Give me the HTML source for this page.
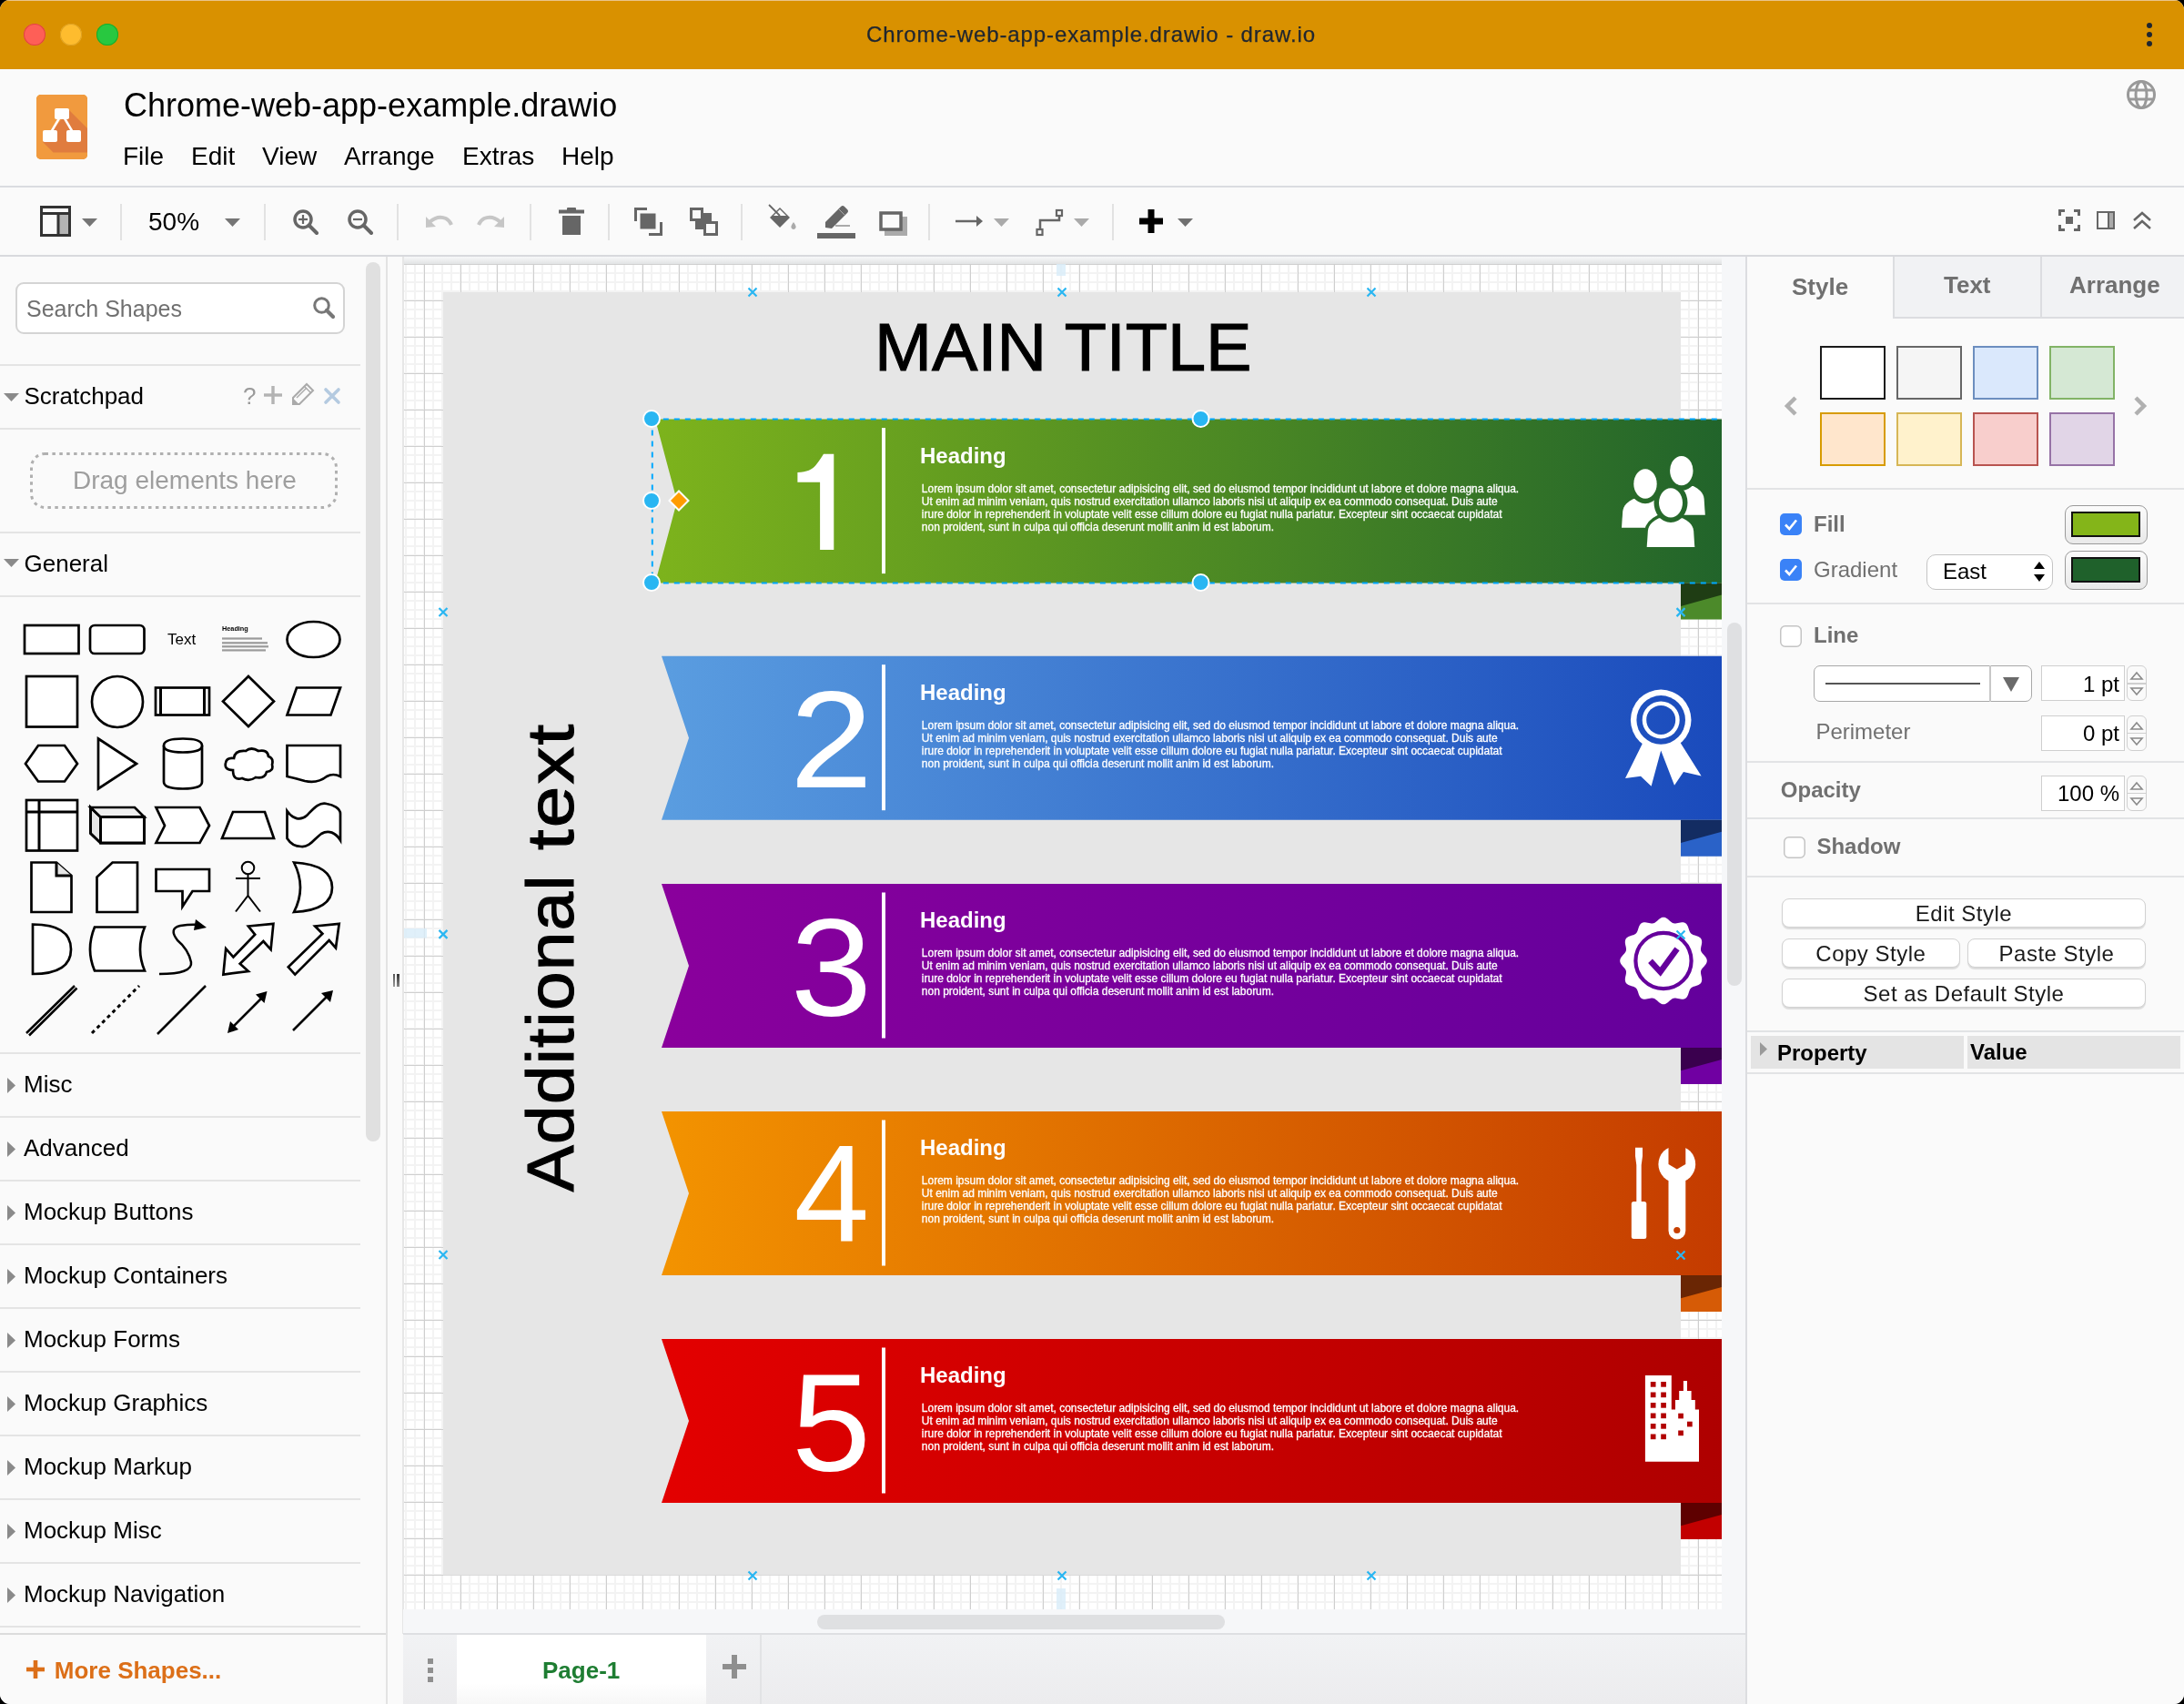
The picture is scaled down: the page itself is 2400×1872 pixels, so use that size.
<!DOCTYPE html><html><head><meta charset="utf-8"><style>
html,body{margin:0;padding:0;background:#000;}
body{width:2400px;height:1872px;overflow:hidden;position:relative;font-family:"Liberation Sans",sans-serif;}
#win{position:absolute;left:0;top:0;width:2400px;height:1872px;border-radius:11px;overflow:hidden;background:#fafafa;}
.t{position:absolute;white-space:pre;line-height:1;}
svg{overflow:visible}
#win{will-change:transform}
</style></head><body><div id="win">
<div style="position:absolute;left:0px;top:0px;width:2400px;height:76px;background:#d99100;"></div>
<div style="position:absolute;left:0px;top:0px;width:2400px;height:1px;background:#e9c48a;"></div>
<div style="position:absolute;left:26px;top:26px;width:24px;height:24px;background:#fe5f57;border-radius:50%;box-shadow:inset 0 0 0 1px #e0443e;"></div>
<div style="position:absolute;left:66px;top:26px;width:24px;height:24px;background:#febc2e;border-radius:50%;box-shadow:inset 0 0 0 1px #dea123;"></div>
<div style="position:absolute;left:106px;top:26px;width:24px;height:24px;background:#28c840;border-radius:50%;box-shadow:inset 0 0 0 1px #1aab29;"></div>
<div class="t" style="left:952px;top:26.3px;font-size:24px;color:#1f2630;font-weight:normal;letter-spacing:0.9px;-webkit-text-stroke:0.25px #1f2630;">Chrome-web-app-example.drawio - draw.io</div>
<div style="position:absolute;left:2359px;top:25px;width:6px;height:6px;background:#1f2630;border-radius:50%;"></div>
<div style="position:absolute;left:2359px;top:35px;width:6px;height:6px;background:#1f2630;border-radius:50%;"></div>
<div style="position:absolute;left:2359px;top:45px;width:6px;height:6px;background:#1f2630;border-radius:50%;"></div>
<div style="position:absolute;left:0px;top:76px;width:2400px;height:129px;background:#fafafa;"></div>
<svg style="position:absolute;left:40px;top:104px;" width="56" height="71" viewBox="0 0 56 71"><rect x="0" y="0" width="56" height="71" rx="5" fill="#f08705"/>
<rect x="0" y="0" width="56" height="71" rx="5" fill="#f19a3e"/>
<path d="M36 17 L56 37 L56 63.5 L18.5 63.5 L7 52 Z" fill="#e07c3e"/>
<line x1="28" y1="21" x2="15" y2="43" stroke="#fff" stroke-width="2.5"/>
<line x1="28" y1="21" x2="41" y2="43" stroke="#fff" stroke-width="2.5"/>
<rect x="20" y="15" width="16" height="12" rx="2" fill="#fff"/>
<rect x="7" y="39" width="16" height="13" rx="2" fill="#fff"/>
<rect x="33" y="39" width="16" height="13" rx="2" fill="#fff"/></svg>
<div class="t" style="left:136px;top:97.5px;font-size:36px;color:#000;font-weight:normal;">Chrome-web-app-example.drawio</div>
<div class="t" style="left:135px;top:158.3px;font-size:28px;color:#000;font-weight:normal;">File</div>
<div class="t" style="left:210px;top:158.3px;font-size:28px;color:#000;font-weight:normal;">Edit</div>
<div class="t" style="left:288px;top:158.3px;font-size:28px;color:#000;font-weight:normal;">View</div>
<div class="t" style="left:378px;top:158.3px;font-size:28px;color:#000;font-weight:normal;">Arrange</div>
<div class="t" style="left:508px;top:158.3px;font-size:28px;color:#000;font-weight:normal;">Extras</div>
<div class="t" style="left:617px;top:158.3px;font-size:28px;color:#000;font-weight:normal;">Help</div>
<svg style="position:absolute;left:2336px;top:87px;" width="34" height="34" viewBox="0 0 34 34"><g fill="none" stroke="#999" stroke-width="3"><circle cx="17" cy="17" r="14.5"/>
<ellipse cx="17" cy="17" rx="6" ry="14.5"/><line x1="3" y1="12" x2="31" y2="12"/><line x1="3" y1="22" x2="31" y2="22"/></g></svg>
<div style="position:absolute;left:0px;top:204px;width:2400px;height:2px;background:#dadce0;"></div>
<div style="position:absolute;left:0px;top:206px;width:2400px;height:75px;background:#fafafa;"></div>
<div style="position:absolute;left:0px;top:280px;width:2400px;height:2px;background:#d8d9dd;"></div>
<svg style="position:absolute;left:44px;top:226px;" width="34" height="34" viewBox="0 0 34 34"><rect x="1.5" y="1.5" width="31" height="31" fill="none" stroke="#333" stroke-width="3"/><rect x="20" y="9" width="11" height="22" fill="#b3b3b3"/><line x1="1.5" y1="8.5" x2="32.5" y2="8.5" stroke="#333" stroke-width="3"/><line x1="20" y1="8.5" x2="20" y2="32.5" stroke="#333" stroke-width="3"/></svg>
<svg style="position:absolute;left:90px;top:240px;" width="17" height="9" viewBox="0 0 17 9"><path d="M0 0 L17 0 L8.5 9 Z" fill="#757575"/></svg>
<div style="position:absolute;left:132px;top:224px;width:2px;height:40px;background:#e2e2e2;"></div>
<div class="t" style="left:163px;top:230.3px;font-size:28px;color:#000;font-weight:normal;">50%</div>
<svg style="position:absolute;left:247px;top:240px;" width="17" height="9" viewBox="0 0 17 9"><path d="M0 0 L17 0 L8.5 9 Z" fill="#757575"/></svg>
<div style="position:absolute;left:290px;top:224px;width:2px;height:40px;background:#e2e2e2;"></div>
<svg style="position:absolute;left:322px;top:230px;" width="28" height="28" viewBox="0 0 28 28"><circle cx="11" cy="11" r="9" fill="none" stroke="#666" stroke-width="3.5"/><line x1="17.5" y1="17.5" x2="26" y2="26" stroke="#666" stroke-width="4" stroke-linecap="round"/><line x1="6" y1="11" x2="16" y2="11" stroke="#666" stroke-width="2.2"/><line x1="11" y1="6" x2="11" y2="16" stroke="#666" stroke-width="2.2"/></svg>
<svg style="position:absolute;left:382px;top:230px;" width="28" height="28" viewBox="0 0 28 28"><circle cx="11" cy="11" r="9" fill="none" stroke="#666" stroke-width="3.5"/><line x1="17.5" y1="17.5" x2="26" y2="26" stroke="#666" stroke-width="4" stroke-linecap="round"/><line x1="6" y1="11" x2="16" y2="11" stroke="#666" stroke-width="2.2"/></svg>
<div style="position:absolute;left:436px;top:224px;width:2px;height:40px;background:#e2e2e2;"></div>
<svg style="position:absolute;left:466px;top:234px;" width="30" height="17" viewBox="0 0 30 17"><path d="M2 16 L2 4 L13 15 Z" fill="#c6c6c6"/><path d="M6 10 Q15 2 24 6 Q28 8 30 13" fill="none" stroke="#c6c6c6" stroke-width="4"/></svg>
<svg style="position:absolute;left:526px;top:234px;" width="30" height="17" viewBox="0 0 30 17"><g transform="translate(30,0) scale(-1,1)"><path d="M2 16 L2 4 L13 15 Z" fill="#c6c6c6"/><path d="M6 10 Q15 2 24 6 Q28 8 30 13" fill="none" stroke="#c6c6c6" stroke-width="4"/></g></svg>
<div style="position:absolute;left:582px;top:224px;width:2px;height:40px;background:#e2e2e2;"></div>
<svg style="position:absolute;left:614px;top:228px;" width="28" height="30" viewBox="0 0 28 30"><rect x="0" y="2.5" width="28" height="4" fill="#666"/><rect x="9" y="0" width="10" height="4" fill="#666" rx="1"/><rect x="4" y="9" width="20" height="21" fill="#666"/></svg>
<div style="position:absolute;left:668px;top:224px;width:2px;height:40px;background:#e2e2e2;"></div>
<svg style="position:absolute;left:697px;top:228px;" width="32" height="31" viewBox="0 0 32 31"><rect x="6.5" y="6.5" width="17" height="17" fill="#666"/><path d="M1.5 15 V1.5 H14" fill="none" stroke="#666" stroke-width="3"/><path d="M16 29.5 H29.5 V16" fill="none" stroke="#666" stroke-width="3"/></svg>
<svg style="position:absolute;left:758px;top:228px;" width="32" height="31" viewBox="0 0 32 31"><rect x="6" y="6" width="18" height="18" fill="#666"/><rect x="1.5" y="1.5" width="12" height="12" fill="#fafafa" stroke="#666" stroke-width="3"/><rect x="16.5" y="16.5" width="13" height="13" fill="#fafafa" stroke="#666" stroke-width="3"/></svg>
<div style="position:absolute;left:814px;top:224px;width:2px;height:40px;background:#e2e2e2;"></div>
<svg style="position:absolute;left:843px;top:224px;" width="34" height="32" viewBox="0 0 34 32"><path d="M3 15 L14 4 L25 15 L14 26 Z" fill="#666"/><path d="M7 13 L14 6 L21 13 Z" fill="#fafafa"/><line x1="2" y1="1" x2="14" y2="13" stroke="#666" stroke-width="1.8"/><path d="M29 20 Q33 25 31 27 Q29 29 27 27 Q25 25 29 20 Z" fill="#aaa"/></svg>
<svg style="position:absolute;left:898px;top:226px;" width="42" height="37" viewBox="0 0 42 37"><path d="M9 24 L9 18 L26 1 Q28 -1 30 1 L33 4 Q35 6 33 8 L16 25 Z" fill="#666"/><line x1="24" y1="4" x2="30" y2="10" stroke="#aaa" stroke-width="1"/><rect x="20" y="21" width="16" height="2" fill="#aaa"/><rect x="0" y="30" width="42" height="6" fill="#666"/></svg>
<svg style="position:absolute;left:966px;top:232px;" width="31" height="27" viewBox="0 0 31 27"><rect x="6" y="6" width="25" height="21" fill="#aaa"/><rect x="2" y="2" width="22" height="18" fill="#fafafa" stroke="#666" stroke-width="3.5"/></svg>
<div style="position:absolute;left:1020px;top:224px;width:2px;height:40px;background:#e2e2e2;"></div>
<svg style="position:absolute;left:1050px;top:236px;" width="31" height="14" viewBox="0 0 31 14"><line x1="0" y1="7" x2="25" y2="7" stroke="#666" stroke-width="2.5"/><path d="M23 1 L30 7 L23 13 Z" fill="#666"/></svg>
<svg style="position:absolute;left:1092px;top:240px;" width="17" height="9" viewBox="0 0 17 9"><path d="M0 0 L17 0 L8.5 9 Z" fill="#aaa"/></svg>
<svg style="position:absolute;left:1137px;top:229px;" width="32" height="31" viewBox="0 0 32 31"><path d="M6 25 V13 H27 V5" fill="none" stroke="#666" stroke-width="2.5"/><rect x="2.5" y="23" width="6" height="6" fill="#fafafa" stroke="#666" stroke-width="2.2"/><rect x="24" y="2" width="6" height="6" fill="#fafafa" stroke="#666" stroke-width="2.2"/></svg>
<svg style="position:absolute;left:1180px;top:240px;" width="17" height="9" viewBox="0 0 17 9"><path d="M0 0 L17 0 L8.5 9 Z" fill="#aaa"/></svg>
<div style="position:absolute;left:1222px;top:224px;width:2px;height:40px;background:#e2e2e2;"></div>
<svg style="position:absolute;left:1252px;top:230px;" width="26" height="26" viewBox="0 0 26 26"><rect x="9.5" y="0" width="7" height="26" fill="#000"/><rect x="0" y="9.5" width="26" height="7" fill="#000"/></svg>
<svg style="position:absolute;left:1294px;top:240px;" width="17" height="9" viewBox="0 0 17 9"><path d="M0 0 L17 0 L8.5 9 Z" fill="#707070"/></svg>
<svg style="position:absolute;left:2262px;top:230px;" width="24" height="24" viewBox="0 0 24 24"><path d="M0 7 V0 H7 V3 H3 V7 Z M17 0 H24 V7 H21 V3 H17 Z M0 17 H3 V21 H7 V24 H0 Z M21 17 H24 V24 H17 V21 H21 Z" fill="#666"/><rect x="8" y="8" width="8" height="8" fill="#666"/></svg>
<svg style="position:absolute;left:2304px;top:232px;" width="20" height="20" viewBox="0 0 20 20"><rect x="1" y="1" width="18" height="18" fill="none" stroke="#666" stroke-width="2"/><rect x="13" y="2" width="5" height="16" fill="#aaa"/><line x1="13" y1="1" x2="13" y2="19" stroke="#666" stroke-width="2"/></svg>
<svg style="position:absolute;left:2343px;top:232px;" width="22" height="20" viewBox="0 0 22 20"><path d="M2 10 L11 2 L20 10 M2 19 L11 11 L20 19" fill="none" stroke="#666" stroke-width="2.5"/></svg>
<div style="position:absolute;left:0px;top:282px;width:424px;height:1513px;background:#fafafa;"></div>
<div style="position:absolute;left:424px;top:282px;width:2px;height:1590px;background:#e3e3e3;"></div>
<div style="position:absolute;left:426px;top:282px;width:17px;height:1513px;background:#fafafa;"></div>
<div style="position:absolute;left:431.5px;top:1070px;width:2.5px;height:14px;background:linear-gradient(#555,#999);"></div>
<div style="position:absolute;left:436px;top:1070px;width:2.5px;height:14px;background:linear-gradient(#333,#888);"></div>
<div style="position:absolute;left:402px;top:288px;width:16px;height:966px;background:#e0e0e0;border-radius:8px;"></div>
<div style="position:absolute;left:17px;top:310px;width:362px;height:57px;background:#fff;border:2px solid #d4d4d4;border-radius:9px;box-sizing:border-box;"></div>
<div class="t" style="left:29px;top:326.8px;font-size:25px;color:#707070;font-weight:normal;">Search Shapes</div>
<svg style="position:absolute;left:343px;top:325px;" width="26" height="26" viewBox="0 0 26 26"><circle cx="10.5" cy="10.5" r="7.8" fill="none" stroke="#777" stroke-width="3"/><line x1="16" y1="16" x2="23" y2="23" stroke="#777" stroke-width="4.2" stroke-linecap="round"/></svg>
<div style="position:absolute;left:0px;top:400px;width:396px;height:2px;background:#e4e4e4;"></div>
<svg style="position:absolute;left:4px;top:432px;" width="17" height="9" viewBox="0 0 17 9"><path d="M0 0 L17 0 L8.5 9 Z" fill="#8a8a8a"/></svg>
<div class="t" style="left:26.5px;top:422.0px;font-size:26px;color:#000;font-weight:normal;">Scratchpad</div>
<div class="t" style="left:267px;top:421.8px;font-size:26px;color:#9a9a9a;font-weight:normal;">?</div>
<svg style="position:absolute;left:290px;top:424px;" width="20" height="20" viewBox="0 0 20 20"><rect x="8.3" y="0" width="3.4" height="20" fill="#b3b3b3"/><rect x="0" y="8.3" width="20" height="3.4" fill="#b3b3b3"/></svg>
<svg style="position:absolute;left:322px;top:422px;" width="22" height="22" viewBox="0 0 22 22"><path d="M0 22 L0 15 L15 0 L22 7 L7 22 Z" fill="none" stroke="#aaa" stroke-width="2"/><path d="M0 22 L0 15.5 L6.5 22 Z" fill="#aaa"/><line x1="4" y1="15" x2="15" y2="4" stroke="#aaa" stroke-width="1.5"/><line x1="12" y1="2" x2="20" y2="10" stroke="#aaa" stroke-width="1.5"/></svg>
<svg style="position:absolute;left:356px;top:426px;" width="18" height="18" viewBox="0 0 18 18"><path d="M2 2 L16 16 M16 2 L2 16" stroke="#b4cae0" stroke-width="3.6" stroke-linecap="round"/></svg>
<div style="position:absolute;left:0px;top:470px;width:396px;height:2px;background:#e4e4e4;"></div>
<svg style="position:absolute;left:33px;top:497px;" width="338" height="62" viewBox="0 0 338 62"><rect x="1.5" y="1.5" width="335" height="59" rx="15" fill="none" stroke="#b0b0b0" stroke-width="3" stroke-dasharray="3.5 4.4"/></svg>
<div class="t" style="left:80px;top:514.3px;font-size:28px;color:#9e9e9e;font-weight:normal;">Drag elements here</div>
<div style="position:absolute;left:0px;top:584px;width:396px;height:2px;background:#e4e4e4;"></div>
<svg style="position:absolute;left:4px;top:614px;" width="17" height="9" viewBox="0 0 17 9"><path d="M0 0 L17 0 L8.5 9 Z" fill="#8a8a8a"/></svg>
<div class="t" style="left:26.5px;top:606.0px;font-size:26px;color:#000;font-weight:normal;">General</div>
<div style="position:absolute;left:0px;top:654px;width:396px;height:2px;background:#e4e4e4;"></div>
<svg style="position:absolute;left:0px;top:0px;" width="400" height="1200" viewBox="0 0 400 1200"><rect x="27" y="687" width="59.5" height="31" stroke="#000" stroke-width="2.7" fill="#fff"/><rect x="99" y="687" width="59.5" height="31" rx="5" stroke="#000" stroke-width="2.7" fill="#fff"/><text x="184" y="708" font-family="Liberation Sans" font-size="17" fill="#000">Text</text><text x="244" y="693" font-family="Liberation Sans" font-size="7.3" font-weight="bold" fill="#000">Heading</text><rect x="244" y="700.4" width="44" height="2.2" fill="#9a9a9a"/><rect x="244" y="705.2" width="50" height="2.2" fill="#9a9a9a"/><rect x="244" y="709.2" width="51" height="2.2" fill="#9a9a9a"/><rect x="244" y="713.3" width="48" height="2.2" fill="#9a9a9a"/><ellipse cx="344.5" cy="702.5" rx="29" ry="19.5" stroke="#000" stroke-width="2.7" fill="#fff"/><rect x="29" y="743" width="56" height="55.5" stroke="#000" stroke-width="2.7" fill="#fff"/><circle cx="129" cy="771" r="28" stroke="#000" stroke-width="2.7" fill="#fff"/><rect x="171" y="755.5" width="59" height="30" stroke="#000" stroke-width="2.7" fill="#fff"/><line x1="176.5" y1="755.5" x2="176.5" y2="785.5" stroke="#000" stroke-width="3"/><line x1="224.5" y1="755.5" x2="224.5" y2="785.5" stroke="#000" stroke-width="3"/><path d="M273 743 L301 770.5 L273 798 L245 770.5 Z" stroke="#000" stroke-width="2.7" fill="#fff"/><path d="M326 755.5 L374 755.5 L363.5 785.5 L315.5 785.5 Z" stroke="#000" stroke-width="2.7" fill="#fff"/><path d="M42 819 L71 819 L85 839 L71 858.5 L42 858.5 L28 839 Z" stroke="#000" stroke-width="2.7" fill="#fff"/><path d="M108 811.5 L150 839 L108 866.5 Z" stroke="#000" stroke-width="2.7" fill="#fff"/><path d="M180 819 Q180 811.5 201 811.5 Q222 811.5 222 819 L222 859 Q222 866.5 201 866.5 Q180 866.5 180 859 Z" stroke="#000" stroke-width="2.7" fill="#fff"/><path d="M180 819 Q180 826.5 201 826.5 Q222 826.5 222 819" stroke="#000" stroke-width="2.7" fill="#fff"/><path d="M256 846 Q246 846 248 838 Q249 832 257 833 Q258 824 270 825 Q276 820 284 825 Q294 823 295 831 Q301 833 299 840 Q301 847 293 848 Q291 856 281 854 Q274 859 266 855 Q256 858 256 846 Z" stroke="#000" stroke-width="2.7" fill="#fff"/><path d="M315.5 819 L374 819 L374 853 Q366 849 359 853 Q349 861 335 858 Q325 855 315.5 853 Z" stroke="#000" stroke-width="2.7" fill="#fff"/><rect x="29" y="879" width="56" height="55.5" stroke="#000" stroke-width="2.7" fill="#fff"/><line x1="29" y1="892" x2="85" y2="892" stroke="#000" stroke-width="3"/><line x1="43" y1="879" x2="43" y2="934.5" stroke="#000" stroke-width="3"/><path d="M99.5 887 L110.5 897.5 L158.5 897.5 L158.5 926 L110.5 926 L99.5 915.5 Z" fill="#e6e6e6" stroke="#000" stroke-width="3"/><path d="M99.5 887 L148 887 L158.5 897.5 L110.5 897.5 Z" fill="#f0f0f0" stroke="#000" stroke-width="2.7"/><rect x="110.5" y="897.5" width="48" height="28.5" fill="#fff" stroke="#000" stroke-width="3"/><path d="M171.5 887 L219.5 887 L230 907 L219.5 926 L171.5 926 L181 907 Z" stroke="#000" stroke-width="2.7" fill="#fff"/><path d="M256 892 L291 892 L301 921 L244 921 Z" stroke="#000" stroke-width="2.7" fill="#fff"/><path d="M315.5 891 C322 900 330 902 337 896 C344 889 350 881 359 883 C366 884 374 888 374 894 L374 923 C369 915 361 911 353 916 C345 922 340 931 331 930 C323 930 318 925 315.5 921 Z" stroke="#000" stroke-width="2.7" fill="#fff"/><path d="M34.5 947.5 L62 947.5 L78.5 962 L78.5 1002 L34.5 1002 Z" stroke="#000" stroke-width="2.7" fill="#fff"/><path d="M62 947.5 L62 962 L78.5 962" fill="#e6e6e6" stroke="#000" stroke-width="3"/><path d="M123.6 947.5 L151 947.5 L151 1002 L106.5 1002 L106.5 963.5 Z" stroke="#000" stroke-width="2.7" fill="#fff"/><path d="M171.5 955 L230 955 L230 979 L211.5 979 L200.5 996 L200.5 979 L171.5 979 Z" stroke="#000" stroke-width="2.7" fill="#fff"/><circle cx="272.5" cy="953.5" r="6.8" fill="none" stroke="#000" stroke-width="2"/><path d="M272.5 960.5 L272.5 984 M259 965 L286 965 M259 1001.5 L272.5 984 L286 1001.5" fill="none" stroke="#000" stroke-width="2"/><path d="M323 947.5 Q365 950 365 975 Q365 1000 323 1002 Q337 975 323 947.5 Z" stroke="#000" stroke-width="2.7" fill="#fff"/><path d="M36 1015.5 Q78 1015.5 78 1043 Q78 1070 36 1070 Z" stroke="#000" stroke-width="2.7" fill="#fff"/><path d="M104 1018.5 L159 1018.5 Q149 1043 159 1066.5 L104 1066.5 Q94 1043 104 1018.5 Z" stroke="#000" stroke-width="2.7" fill="#fff"/><path d="M175 1070 Q212 1070 210 1057 Q207 1043 195 1033 Q185 1020 198 1017 Q210 1015 220 1016" fill="none" stroke="#000" stroke-width="2.5"/><path d="M215 1010 L227 1019 L213 1022 Z" fill="#000"/><path d="M300.4 1014.8 L272.9 1017.5 L280.2 1026.7 L256.4 1051.4 L248.2 1042.2 L245.4 1070.6 L272.9 1067 L263.7 1058.7 L289.4 1034 L297.6 1043.1 Z" stroke="#000" stroke-width="2.7" fill="#fff"/><path d="M372.7 1014.8 L346.2 1017.5 L354.4 1025.8 L316.8 1062.4 L324.2 1070.6 L361.7 1033 L369 1041.3 Z" stroke="#000" stroke-width="2.7" fill="#fff"/><path d="M29 1135 L82 1083 M32 1137.5 L84.5 1085.5" stroke="#000" stroke-width="2.5"/><path d="M101 1135 L153 1083" stroke="#000" stroke-width="3" stroke-dasharray="4 4"/><path d="M173 1136 L226 1083" stroke="#000" stroke-width="2.5"/><path d="M254 1130 L291 1093" stroke="#000" stroke-width="2.5"/><path d="M250 1135 L253 1122 L262 1131 Z M293.5 1089 L290.5 1102 L281 1092.5 Z" fill="#000"/><path d="M322 1132 L360 1094" stroke="#000" stroke-width="2.5"/><path d="M366 1088 L363 1101 L353 1091 Z" fill="#000"/></svg>
<div style="position:absolute;left:0px;top:1156px;width:396px;height:2px;background:#e4e4e4;"></div>
<svg style="position:absolute;left:8px;top:1184px;" width="9" height="17" viewBox="0 0 9 17"><path d="M0 0 L9 8.5 L0 17 Z" fill="#8a8a8a"/></svg>
<div class="t" style="left:26px;top:1178.0px;font-size:26px;color:#000;font-weight:normal;">Misc</div>
<div style="position:absolute;left:0px;top:1226px;width:396px;height:2px;background:#e4e4e4;"></div>
<svg style="position:absolute;left:8px;top:1254px;" width="9" height="17" viewBox="0 0 9 17"><path d="M0 0 L9 8.5 L0 17 Z" fill="#8a8a8a"/></svg>
<div class="t" style="left:26px;top:1248.0px;font-size:26px;color:#000;font-weight:normal;">Advanced</div>
<div style="position:absolute;left:0px;top:1296px;width:396px;height:2px;background:#e4e4e4;"></div>
<svg style="position:absolute;left:8px;top:1324px;" width="9" height="17" viewBox="0 0 9 17"><path d="M0 0 L9 8.5 L0 17 Z" fill="#8a8a8a"/></svg>
<div class="t" style="left:26px;top:1318.0px;font-size:26px;color:#000;font-weight:normal;">Mockup Buttons</div>
<div style="position:absolute;left:0px;top:1366px;width:396px;height:2px;background:#e4e4e4;"></div>
<svg style="position:absolute;left:8px;top:1394px;" width="9" height="17" viewBox="0 0 9 17"><path d="M0 0 L9 8.5 L0 17 Z" fill="#8a8a8a"/></svg>
<div class="t" style="left:26px;top:1388.0px;font-size:26px;color:#000;font-weight:normal;">Mockup Containers</div>
<div style="position:absolute;left:0px;top:1436px;width:396px;height:2px;background:#e4e4e4;"></div>
<svg style="position:absolute;left:8px;top:1464px;" width="9" height="17" viewBox="0 0 9 17"><path d="M0 0 L9 8.5 L0 17 Z" fill="#8a8a8a"/></svg>
<div class="t" style="left:26px;top:1458.0px;font-size:26px;color:#000;font-weight:normal;">Mockup Forms</div>
<div style="position:absolute;left:0px;top:1506px;width:396px;height:2px;background:#e4e4e4;"></div>
<svg style="position:absolute;left:8px;top:1534px;" width="9" height="17" viewBox="0 0 9 17"><path d="M0 0 L9 8.5 L0 17 Z" fill="#8a8a8a"/></svg>
<div class="t" style="left:26px;top:1528.0px;font-size:26px;color:#000;font-weight:normal;">Mockup Graphics</div>
<div style="position:absolute;left:0px;top:1576px;width:396px;height:2px;background:#e4e4e4;"></div>
<svg style="position:absolute;left:8px;top:1604px;" width="9" height="17" viewBox="0 0 9 17"><path d="M0 0 L9 8.5 L0 17 Z" fill="#8a8a8a"/></svg>
<div class="t" style="left:26px;top:1598.0px;font-size:26px;color:#000;font-weight:normal;">Mockup Markup</div>
<div style="position:absolute;left:0px;top:1646px;width:396px;height:2px;background:#e4e4e4;"></div>
<svg style="position:absolute;left:8px;top:1674px;" width="9" height="17" viewBox="0 0 9 17"><path d="M0 0 L9 8.5 L0 17 Z" fill="#8a8a8a"/></svg>
<div class="t" style="left:26px;top:1668.0px;font-size:26px;color:#000;font-weight:normal;">Mockup Misc</div>
<div style="position:absolute;left:0px;top:1716px;width:396px;height:2px;background:#e4e4e4;"></div>
<svg style="position:absolute;left:8px;top:1744px;" width="9" height="17" viewBox="0 0 9 17"><path d="M0 0 L9 8.5 L0 17 Z" fill="#8a8a8a"/></svg>
<div class="t" style="left:26px;top:1738.0px;font-size:26px;color:#000;font-weight:normal;">Mockup Navigation</div>
<div style="position:absolute;left:0px;top:1786px;width:396px;height:2px;background:#e4e4e4;"></div>
<div style="position:absolute;left:0px;top:1794px;width:424px;height:2px;background:#dcdcdc;"></div>
<div style="position:absolute;left:0px;top:1796px;width:424px;height:76px;background:#fafafa;"></div>
<svg style="position:absolute;left:28.5px;top:1824px;" width="20" height="20" viewBox="0 0 20 20"><rect x="7.7" y="0" width="4.6" height="20" fill="#dc6f18"/><rect x="0" y="7.7" width="20" height="4.6" fill="#dc6f18"/></svg>
<div class="t" style="left:59.8px;top:1822.0px;font-size:26px;color:#dc6f18;font-weight:bold;">More Shapes...</div>
<div style="position:absolute;left:442px;top:282px;width:2px;height:1513px;background:#e6e6e6;"></div>
<div style="position:absolute;left:444px;top:282px;width:1448px;height:8px;background:linear-gradient(#f7f8f9,#e2e4e5);"></div>
<div style="position:absolute;left:1892px;top:282px;width:26px;height:1513px;background:#f6f7f9;"></div>
<div style="position:absolute;left:443px;top:1768px;width:1449px;height:26px;background:#f6f7f9;"></div>
<div style="position:absolute;left:1898px;top:684px;width:16px;height:399px;background:#dfe0e2;border-radius:8px;"></div>
<div style="position:absolute;left:898px;top:1774px;width:448px;height:16px;background:#dfe0e2;border-radius:8px;"></div>
<div style="position:absolute;left:443px;top:1794px;width:1476px;height:2px;background:#dedfe2;"></div>
<div style="position:absolute;left:444px;top:290px;width:1448px;height:1478px;overflow:hidden;background-color:#fff;background-image:linear-gradient(to right,#cfcfcf 1px,transparent 1px),linear-gradient(to bottom,#cfcfcf 1px,transparent 1px),linear-gradient(to right,#f3f3f3 2px,transparent 2px),linear-gradient(to bottom,#f3f3f3 2px,transparent 2px);background-size:40px 40px,40px 40px,10px 10px,10px 10px;background-position:22px 0,0 0,1px 0,0 -1px;">
<svg width="1448" height="1478" viewBox="444 290 1448 1478" style="position:absolute;left:0;top:0"><defs><linearGradient id="bg0" gradientUnits="userSpaceOnUse" x1="720" y1="0" x2="1923" y2="0"><stop offset="0" stop-color="#7db31c"/><stop offset="1" stop-color="#1f622b"/></linearGradient><linearGradient id="bg1" gradientUnits="userSpaceOnUse" x1="727" y1="0" x2="1923" y2="0"><stop offset="0" stop-color="#5a9de0"/><stop offset="1" stop-color="#1848bb"/></linearGradient><linearGradient id="bg2" gradientUnits="userSpaceOnUse" x1="727" y1="0" x2="1923" y2="0"><stop offset="0" stop-color="#8a009c"/><stop offset="1" stop-color="#62009c"/></linearGradient><linearGradient id="bg3" gradientUnits="userSpaceOnUse" x1="727" y1="0" x2="1923" y2="0"><stop offset="0" stop-color="#f39300"/><stop offset="1" stop-color="#c33900"/></linearGradient><linearGradient id="bg4" gradientUnits="userSpaceOnUse" x1="727" y1="0" x2="1923" y2="0"><stop offset="0" stop-color="#e30000"/><stop offset="1" stop-color="#ad0000"/></linearGradient></defs><rect x="487" y="321" width="1360" height="1409.5" fill="#e6e6e6"/><text transform="translate(961,407) scale(1.015,1)" x="0" y="0" font-family="Liberation Sans" font-size="74.5" fill="#000" stroke="#000" stroke-width="1.1">MAIN TITLE</text><text transform="translate(630.4,1309.2) rotate(-90) scale(1.063,1)" x="0" y="0" font-family="Liberation Sans" font-size="72" letter-spacing="1.2" fill="#000" stroke="#000" stroke-width="1.1">Additional</text><text transform="translate(630.4,934.1) rotate(-90) scale(1.134,1)" x="0" y="0" font-family="Liberation Sans" font-size="72" letter-spacing="2.0" fill="#000" stroke="#000" stroke-width="1.1">text</text><path d="M720 460.6 L1923 460.6 L1923 640.6 L720 640.6 L744 550.6 Z" fill="url(#bg0)"/><path d="M1847 640.6 L1892 640.6 L1892 680.6 L1847 680.6 Z" fill="#4c8a2a"/><path d="M1847 640.6 L1892 640.6 L1892 653.6 L1847 665.9 Z" fill="#1f3d14"/><path d="M905 498.7 L916.3 498.7 L916.3 603.9 L901.1 603.9 L901.1 529.7 L876.4 529.7 L876.4 519 C887 518.5 892.5 516 896.5 511 C900 506.5 903 502 905 498.7 Z" fill="#fff"/><rect x="969" y="470.1" width="4" height="160" fill="#fff"/><text x="1011" y="508.5" font-family="Liberation Sans" font-size="24" font-weight="bold" fill="#fff">Heading</text><text x="1012.8" y="540.9" font-family="Liberation Sans" font-size="12" fill="#fff" stroke="#fff" stroke-width="0.3">Lorem ipsum dolor sit amet, consectetur adipisicing elit, sed do eiusmod tempor incididunt ut labore et dolore magna aliqua.</text><text x="1012.8" y="554.8" font-family="Liberation Sans" font-size="12" fill="#fff" stroke="#fff" stroke-width="0.3">Ut enim ad minim veniam, quis nostrud exercitation ullamco laboris nisi ut aliquip ex ea commodo consequat. Duis aute</text><text x="1012.8" y="568.7" font-family="Liberation Sans" font-size="12" fill="#fff" stroke="#fff" stroke-width="0.3">irure dolor in reprehenderit in voluptate velit esse cillum dolore eu fugiat nulla pariatur. Excepteur sint occaecat cupidatat</text><text x="1012.8" y="582.6" font-family="Liberation Sans" font-size="12" fill="#fff" stroke="#fff" stroke-width="0.3">non proident, sunt in culpa qui officia deserunt mollit anim id est laborum.</text><path d="M727 720.7 L1923 720.7 L1923 900.7 L727 900.7 L757 810.7 Z" fill="url(#bg1)"/><path d="M1847 900.7 L1892 900.7 L1892 940.7 L1847 940.7 Z" fill="#2a62c8"/><path d="M1847 900.7 L1892 900.7 L1892 913.7 L1847 926.0 Z" fill="#132c62"/><text transform="translate(868.1,864.5) scale(1.07,1)" x="0" y="0" font-family="Liberation Sans" font-size="153" fill="#fff">2</text><rect x="969" y="730.2" width="4" height="160" fill="#fff"/><text x="1011" y="768.6" font-family="Liberation Sans" font-size="24" font-weight="bold" fill="#fff">Heading</text><text x="1012.8" y="801.0" font-family="Liberation Sans" font-size="12" fill="#fff" stroke="#fff" stroke-width="0.3">Lorem ipsum dolor sit amet, consectetur adipisicing elit, sed do eiusmod tempor incididunt ut labore et dolore magna aliqua.</text><text x="1012.8" y="814.9" font-family="Liberation Sans" font-size="12" fill="#fff" stroke="#fff" stroke-width="0.3">Ut enim ad minim veniam, quis nostrud exercitation ullamco laboris nisi ut aliquip ex ea commodo consequat. Duis aute</text><text x="1012.8" y="828.8" font-family="Liberation Sans" font-size="12" fill="#fff" stroke="#fff" stroke-width="0.3">irure dolor in reprehenderit in voluptate velit esse cillum dolore eu fugiat nulla pariatur. Excepteur sint occaecat cupidatat</text><text x="1012.8" y="842.7" font-family="Liberation Sans" font-size="12" fill="#fff" stroke="#fff" stroke-width="0.3">non proident, sunt in culpa qui officia deserunt mollit anim id est laborum.</text><path d="M727 971.0 L1923 971.0 L1923 1151.0 L727 1151.0 L757 1061.0 Z" fill="url(#bg2)"/><path d="M1847 1151.0 L1892 1151.0 L1892 1191.0 L1847 1191.0 Z" fill="#7000a2"/><path d="M1847 1151.0 L1892 1151.0 L1892 1164.0 L1847 1176.3 Z" fill="#3a004e"/><text transform="translate(868.7,1116) scale(1.051,1)" x="0" y="0" font-family="Liberation Sans" font-size="153" fill="#fff">3</text><rect x="969" y="980.5" width="4" height="160" fill="#fff"/><text x="1011" y="1018.9" font-family="Liberation Sans" font-size="24" font-weight="bold" fill="#fff">Heading</text><text x="1012.8" y="1051.3" font-family="Liberation Sans" font-size="12" fill="#fff" stroke="#fff" stroke-width="0.3">Lorem ipsum dolor sit amet, consectetur adipisicing elit, sed do eiusmod tempor incididunt ut labore et dolore magna aliqua.</text><text x="1012.8" y="1065.2" font-family="Liberation Sans" font-size="12" fill="#fff" stroke="#fff" stroke-width="0.3">Ut enim ad minim veniam, quis nostrud exercitation ullamco laboris nisi ut aliquip ex ea commodo consequat. Duis aute</text><text x="1012.8" y="1079.1" font-family="Liberation Sans" font-size="12" fill="#fff" stroke="#fff" stroke-width="0.3">irure dolor in reprehenderit in voluptate velit esse cillum dolore eu fugiat nulla pariatur. Excepteur sint occaecat cupidatat</text><text x="1012.8" y="1093.0" font-family="Liberation Sans" font-size="12" fill="#fff" stroke="#fff" stroke-width="0.3">non proident, sunt in culpa qui officia deserunt mollit anim id est laborum.</text><path d="M727 1221.0 L1923 1221.0 L1923 1401.0 L727 1401.0 L757 1311.0 Z" fill="url(#bg3)"/><path d="M1847 1401.0 L1892 1401.0 L1892 1441.0 L1847 1441.0 Z" fill="#d65b06"/><path d="M1847 1401.0 L1892 1401.0 L1892 1414.0 L1847 1426.3 Z" fill="#6a2604"/><text transform="translate(872.5,1364) scale(0.974,1)" x="0" y="0" font-family="Liberation Sans" font-size="153" fill="#fff">4</text><rect x="969" y="1230.5" width="4" height="160" fill="#fff"/><text x="1011" y="1268.9" font-family="Liberation Sans" font-size="24" font-weight="bold" fill="#fff">Heading</text><text x="1012.8" y="1301.3" font-family="Liberation Sans" font-size="12" fill="#fff" stroke="#fff" stroke-width="0.3">Lorem ipsum dolor sit amet, consectetur adipisicing elit, sed do eiusmod tempor incididunt ut labore et dolore magna aliqua.</text><text x="1012.8" y="1315.2" font-family="Liberation Sans" font-size="12" fill="#fff" stroke="#fff" stroke-width="0.3">Ut enim ad minim veniam, quis nostrud exercitation ullamco laboris nisi ut aliquip ex ea commodo consequat. Duis aute</text><text x="1012.8" y="1329.1" font-family="Liberation Sans" font-size="12" fill="#fff" stroke="#fff" stroke-width="0.3">irure dolor in reprehenderit in voluptate velit esse cillum dolore eu fugiat nulla pariatur. Excepteur sint occaecat cupidatat</text><text x="1012.8" y="1343.0" font-family="Liberation Sans" font-size="12" fill="#fff" stroke="#fff" stroke-width="0.3">non proident, sunt in culpa qui officia deserunt mollit anim id est laborum.</text><path d="M727 1471.0 L1923 1471.0 L1923 1651.0 L727 1651.0 L757 1561.0 Z" fill="url(#bg4)"/><path d="M1847 1651.0 L1892 1651.0 L1892 1691.0 L1847 1691.0 Z" fill="#c20000"/><path d="M1847 1651.0 L1892 1651.0 L1892 1664.0 L1847 1676.3 Z" fill="#5e0000"/><text transform="translate(869.9,1616) scale(1.022,1)" x="0" y="0" font-family="Liberation Sans" font-size="153" fill="#fff">5</text><rect x="969" y="1480.5" width="4" height="160" fill="#fff"/><text x="1011" y="1518.9" font-family="Liberation Sans" font-size="24" font-weight="bold" fill="#fff">Heading</text><text x="1012.8" y="1551.3" font-family="Liberation Sans" font-size="12" fill="#fff" stroke="#fff" stroke-width="0.3">Lorem ipsum dolor sit amet, consectetur adipisicing elit, sed do eiusmod tempor incididunt ut labore et dolore magna aliqua.</text><text x="1012.8" y="1565.2" font-family="Liberation Sans" font-size="12" fill="#fff" stroke="#fff" stroke-width="0.3">Ut enim ad minim veniam, quis nostrud exercitation ullamco laboris nisi ut aliquip ex ea commodo consequat. Duis aute</text><text x="1012.8" y="1579.1" font-family="Liberation Sans" font-size="12" fill="#fff" stroke="#fff" stroke-width="0.3">irure dolor in reprehenderit in voluptate velit esse cillum dolore eu fugiat nulla pariatur. Excepteur sint occaecat cupidatat</text><text x="1012.8" y="1593.0" font-family="Liberation Sans" font-size="12" fill="#fff" stroke="#fff" stroke-width="0.3">non proident, sunt in culpa qui officia deserunt mollit anim id est laborum.</text><path d="M1782 579.8 L1783.2 561.8 C1784 555 1789 551 1795 548 L1821 548 C1827 551 1832 555 1832.8 561.8 L1834 579.8 Z" fill="#fff"/><ellipse cx="1808" cy="531.5" rx="12.7" ry="16.2" fill="#fff" stroke="url(#bg0)" stroke-width="11" paint-order="stroke"/><path d="M1821.8 565.7 L1823.0 547.7 C1823.8 541 1828.8 537 1834.8 534 L1860.8 534 C1866.8 537 1871.8 541 1872.6 547.7 L1873.8 565.7 Z" fill="#fff"/><ellipse cx="1847.8" cy="517.1" rx="12.7" ry="16.1" fill="#fff" stroke="url(#bg0)" stroke-width="11" paint-order="stroke"/><path d="M1809.7 600.9 L1810.9 582.9 C1811.7 576.2 1816.7 572.2 1823 569.2 L1849 569.2 C1855.3 572.2 1860.3 576.2 1861.1 582.9 L1862.3 600.9 Z" fill="#fff" stroke="url(#bg0)" stroke-width="7" paint-order="stroke"/><ellipse cx="1836" cy="552.3" rx="13" ry="16.1" fill="#fff" stroke="url(#bg0)" stroke-width="11" paint-order="stroke"/><path d="M1805.8 815 L1786 855 L1803 852.8 L1814.6 863.7 L1825.2 824.6 L1840 862.7 L1850 848 L1869.6 852.5 L1846 815 Z" fill="#fff"/><circle cx="1825.2" cy="790.9" r="33.3" fill="#fff"/><circle cx="1825.2" cy="790.9" r="26.8" fill="url(#bg1)"/><circle cx="1825.2" cy="790.9" r="20.5" fill="#fff"/><circle cx="1825.2" cy="790.9" r="16" fill="url(#bg1)"/><path d="M1828.00 1007.70 L1829.25 1007.84 L1830.48 1008.26 L1831.67 1008.92 L1832.81 1009.75 L1833.90 1010.69 L1834.95 1011.65 L1835.96 1012.56 L1836.96 1013.35 L1837.97 1013.95 L1839.03 1014.35 L1840.14 1014.53 L1841.32 1014.51 L1842.58 1014.33 L1843.91 1014.05 L1845.30 1013.74 L1846.71 1013.47 L1848.12 1013.32 L1849.48 1013.35 L1850.75 1013.60 L1851.90 1014.10 L1852.91 1014.85 L1853.76 1015.83 L1854.47 1016.99 L1855.04 1018.28 L1855.52 1019.64 L1855.94 1021.00 L1856.36 1022.29 L1856.84 1023.47 L1857.41 1024.51 L1858.12 1025.38 L1858.99 1026.09 L1860.03 1026.66 L1861.21 1027.14 L1862.50 1027.56 L1863.86 1027.98 L1865.22 1028.46 L1866.51 1029.03 L1867.67 1029.74 L1868.65 1030.59 L1869.40 1031.60 L1869.90 1032.75 L1870.15 1034.02 L1870.18 1035.38 L1870.03 1036.79 L1869.76 1038.20 L1869.45 1039.59 L1869.17 1040.92 L1868.99 1042.18 L1868.97 1043.36 L1869.15 1044.47 L1869.55 1045.53 L1870.15 1046.54 L1870.94 1047.54 L1871.85 1048.55 L1872.81 1049.60 L1873.75 1050.69 L1874.58 1051.83 L1875.24 1053.02 L1875.66 1054.25 L1875.80 1055.50 L1875.66 1056.75 L1875.24 1057.98 L1874.58 1059.17 L1873.75 1060.31 L1872.81 1061.40 L1871.85 1062.45 L1870.94 1063.46 L1870.15 1064.46 L1869.55 1065.47 L1869.15 1066.53 L1868.97 1067.64 L1868.99 1068.82 L1869.17 1070.08 L1869.45 1071.41 L1869.76 1072.80 L1870.03 1074.21 L1870.18 1075.62 L1870.15 1076.98 L1869.90 1078.25 L1869.40 1079.40 L1868.65 1080.41 L1867.67 1081.26 L1866.51 1081.97 L1865.22 1082.54 L1863.86 1083.02 L1862.50 1083.44 L1861.21 1083.86 L1860.03 1084.34 L1858.99 1084.91 L1858.12 1085.62 L1857.41 1086.49 L1856.84 1087.53 L1856.36 1088.71 L1855.94 1090.00 L1855.52 1091.36 L1855.04 1092.72 L1854.47 1094.01 L1853.76 1095.17 L1852.91 1096.15 L1851.90 1096.90 L1850.75 1097.40 L1849.48 1097.65 L1848.12 1097.68 L1846.71 1097.53 L1845.30 1097.26 L1843.91 1096.95 L1842.58 1096.67 L1841.32 1096.49 L1840.14 1096.47 L1839.03 1096.65 L1837.97 1097.05 L1836.96 1097.65 L1835.96 1098.44 L1834.95 1099.35 L1833.90 1100.31 L1832.81 1101.25 L1831.67 1102.08 L1830.48 1102.74 L1829.25 1103.16 L1828.00 1103.30 L1826.75 1103.16 L1825.52 1102.74 L1824.33 1102.08 L1823.19 1101.25 L1822.10 1100.31 L1821.05 1099.35 L1820.04 1098.44 L1819.04 1097.65 L1818.03 1097.05 L1816.97 1096.65 L1815.86 1096.47 L1814.68 1096.49 L1813.42 1096.67 L1812.09 1096.95 L1810.70 1097.26 L1809.29 1097.53 L1807.88 1097.68 L1806.52 1097.65 L1805.25 1097.40 L1804.10 1096.90 L1803.09 1096.15 L1802.24 1095.17 L1801.53 1094.01 L1800.96 1092.72 L1800.48 1091.36 L1800.06 1090.00 L1799.64 1088.71 L1799.16 1087.53 L1798.59 1086.49 L1797.88 1085.62 L1797.01 1084.91 L1795.97 1084.34 L1794.79 1083.86 L1793.50 1083.44 L1792.14 1083.02 L1790.78 1082.54 L1789.49 1081.97 L1788.33 1081.26 L1787.35 1080.41 L1786.60 1079.40 L1786.10 1078.25 L1785.85 1076.98 L1785.82 1075.62 L1785.97 1074.21 L1786.24 1072.80 L1786.55 1071.41 L1786.83 1070.08 L1787.01 1068.82 L1787.03 1067.64 L1786.85 1066.53 L1786.45 1065.47 L1785.85 1064.46 L1785.06 1063.46 L1784.15 1062.45 L1783.19 1061.40 L1782.25 1060.31 L1781.42 1059.17 L1780.76 1057.98 L1780.34 1056.75 L1780.20 1055.50 L1780.34 1054.25 L1780.76 1053.02 L1781.42 1051.83 L1782.25 1050.69 L1783.19 1049.60 L1784.15 1048.55 L1785.06 1047.54 L1785.85 1046.54 L1786.45 1045.53 L1786.85 1044.47 L1787.03 1043.36 L1787.01 1042.18 L1786.83 1040.92 L1786.55 1039.59 L1786.24 1038.20 L1785.97 1036.79 L1785.82 1035.38 L1785.85 1034.02 L1786.10 1032.75 L1786.60 1031.60 L1787.35 1030.59 L1788.33 1029.74 L1789.49 1029.03 L1790.78 1028.46 L1792.14 1027.98 L1793.50 1027.56 L1794.79 1027.14 L1795.97 1026.66 L1797.01 1026.09 L1797.88 1025.38 L1798.59 1024.51 L1799.16 1023.47 L1799.64 1022.29 L1800.06 1021.00 L1800.48 1019.64 L1800.96 1018.28 L1801.53 1016.99 L1802.24 1015.83 L1803.09 1014.85 L1804.10 1014.10 L1805.25 1013.60 L1806.52 1013.35 L1807.88 1013.32 L1809.29 1013.47 L1810.70 1013.74 L1812.09 1014.05 L1813.42 1014.33 L1814.68 1014.51 L1815.86 1014.53 L1816.97 1014.35 L1818.03 1013.95 L1819.04 1013.35 L1820.04 1012.56 L1821.05 1011.65 L1822.10 1010.69 L1823.19 1009.75 L1824.33 1008.92 L1825.52 1008.26 L1826.75 1007.84 L1828.00 1007.70 Z" fill="#fff"/><circle cx="1828" cy="1055.5" r="30.6" fill="none" stroke="url(#bg2)" stroke-width="4.2"/><path d="M1813.5 1055.8 L1824.5 1067.7 L1843 1042.4" fill="none" stroke="url(#bg2)" stroke-width="6.5"/><path d="M1797 1260.7 L1805 1260.7 L1805 1270 L1803.7 1280 L1803.7 1321 L1798.3 1321 L1798.3 1280 L1797 1270 Z" fill="#fff"/><rect x="1792.8" y="1319.9" width="16.5" height="41.1" rx="2.5" fill="#fff"/><circle cx="1842.8" cy="1279" r="20.4" fill="#fff"/><path d="M1833.5 1279 L1833.5 1352 A9.4 9.4 0 0 0 1852.3 1352 L1852.3 1279 Z" fill="#fff"/><path d="M1833.5 1250 L1852.3 1250 L1852.3 1279 L1842.8 1284.5 L1833.5 1279 Z" fill="url(#bg3)"/><circle cx="1842.8" cy="1351.5" r="3.6" fill="url(#bg3)"/><path d="M1807.9 1511 L1836.8 1511 L1836.8 1548.5 L1841 1548.5 L1841 1538 L1845.2 1538 L1845.2 1528 L1849.9 1528 L1849.9 1517 L1854 1517 L1854 1528 L1858.6 1528 L1858.6 1538 L1862.8 1538 L1862.8 1548.5 L1867 1548.5 L1867 1605.8 L1807.9 1605.8 Z" fill="#fff"/><rect x="1813.8" y="1518.0" width="5.7" height="5.7" fill="url(#bg4)"/><rect x="1813.8" y="1529.5" width="5.7" height="5.7" fill="url(#bg4)"/><rect x="1813.8" y="1541.0" width="5.7" height="5.7" fill="url(#bg4)"/><rect x="1813.8" y="1552.5" width="5.7" height="5.7" fill="url(#bg4)"/><rect x="1813.8" y="1564.0" width="5.7" height="5.7" fill="url(#bg4)"/><rect x="1813.8" y="1575.5" width="5.7" height="5.7" fill="url(#bg4)"/><rect x="1825.2" y="1518.0" width="5.7" height="5.7" fill="url(#bg4)"/><rect x="1825.2" y="1529.5" width="5.7" height="5.7" fill="url(#bg4)"/><rect x="1825.2" y="1541.0" width="5.7" height="5.7" fill="url(#bg4)"/><rect x="1825.2" y="1552.5" width="5.7" height="5.7" fill="url(#bg4)"/><rect x="1825.2" y="1564.0" width="5.7" height="5.7" fill="url(#bg4)"/><rect x="1825.2" y="1575.5" width="5.7" height="5.7" fill="url(#bg4)"/><rect x="1844.2" y="1552.7" width="5.7" height="5.7" fill="url(#bg4)"/><rect x="1854" y="1561.7" width="5.7" height="5.7" fill="url(#bg4)"/><rect x="1844.2" y="1571.5" width="5.7" height="5.7" fill="url(#bg4)"/><path d="M716.8 460.6 H1923 M716.8 640.5 H1923 M716.8 460.6 V640.5" fill="none" stroke="#00a8ff" stroke-width="2" stroke-dasharray="6 6"/><circle cx="716" cy="460" r="9" fill="#29b6f2" stroke="#fff" stroke-width="2"/><circle cx="716" cy="550" r="9" fill="#29b6f2" stroke="#fff" stroke-width="2"/><circle cx="716" cy="640" r="9" fill="#29b6f2" stroke="#fff" stroke-width="2"/><circle cx="1319.5" cy="460" r="9" fill="#29b6f2" stroke="#fff" stroke-width="2"/><circle cx="1319.5" cy="640" r="9" fill="#29b6f2" stroke="#fff" stroke-width="2"/><path d="M746 539.5 L756.5 550 L746 560.5 L735.5 550 Z" fill="#ff9c00" stroke="#fff" stroke-width="2"/><rect x="1161" y="282" width="10" height="21" fill="#d8ecf9" opacity="0.8"/><rect x="1161" y="1745" width="10" height="23" fill="#d8ecf9" opacity="0.8"/><rect x="444" y="1020" width="25" height="10.5" fill="#d8ecf9" opacity="0.8"/><path d="M482.5 668.0 L491.5 677.0 M491.5 668.0 L482.5 677.0" stroke="#29b6f2" stroke-width="2.2"/><path d="M482.5 1021.9000000000001 L491.5 1030.9 M491.5 1021.9000000000001 L482.5 1030.9" stroke="#29b6f2" stroke-width="2.2"/><path d="M482.5 1374.0 L491.5 1383.0 M491.5 1374.0 L482.5 1383.0" stroke="#29b6f2" stroke-width="2.2"/><path d="M1842.5 668.1 L1851.5 677.1 M1851.5 668.1 L1842.5 677.1" stroke="#29b6f2" stroke-width="2.2"/><path d="M1842.5 1022.5 L1851.5 1031.5 M1851.5 1022.5 L1842.5 1031.5" stroke="#29b6f2" stroke-width="2.2"/><path d="M1842.5 1374.5 L1851.5 1383.5 M1851.5 1374.5 L1842.5 1383.5" stroke="#29b6f2" stroke-width="2.2"/><path d="M822.5 316.5 L831.5 325.5 M831.5 316.5 L822.5 325.5" stroke="#29b6f2" stroke-width="2.2"/><path d="M1162.5 316.5 L1171.5 325.5 M1171.5 316.5 L1162.5 325.5" stroke="#29b6f2" stroke-width="2.2"/><path d="M1502.5 316.5 L1511.5 325.5 M1511.5 316.5 L1502.5 325.5" stroke="#29b6f2" stroke-width="2.2"/><path d="M822.5 1726.5 L831.5 1735.5 M831.5 1726.5 L822.5 1735.5" stroke="#29b6f2" stroke-width="2.2"/><path d="M1162.5 1726.5 L1171.5 1735.5 M1171.5 1726.5 L1162.5 1735.5" stroke="#29b6f2" stroke-width="2.2"/><path d="M1502.5 1726.5 L1511.5 1735.5 M1511.5 1726.5 L1502.5 1735.5" stroke="#29b6f2" stroke-width="2.2"/></svg>
</div>
<div style="position:absolute;left:443px;top:1796px;width:1476px;height:76px;background:linear-gradient(#f1f2f4,#ececee);"></div>
<div style="position:absolute;left:502px;top:1796px;width:274px;height:76px;background:linear-gradient(#fff 70%,#f7f7f7);"></div>
<div style="position:absolute;left:835px;top:1796px;width:2px;height:76px;background:#e2e3e5;"></div>
<div style="position:absolute;left:470px;top:1822px;width:6px;height:6px;background:#8f8f8f;"></div>
<div style="position:absolute;left:470px;top:1832px;width:6px;height:6px;background:#8f8f8f;"></div>
<div style="position:absolute;left:470px;top:1842px;width:6px;height:6px;background:#8f8f8f;"></div>
<div class="t" style="left:596px;top:1822.4px;font-size:26px;color:#1e7d32;font-weight:bold;">Page-1</div>
<svg style="position:absolute;left:794px;top:1818px;" width="26" height="26" viewBox="0 0 26 26"><rect x="10" y="0" width="6" height="26" fill="#8f8f8f"/><rect x="0" y="10" width="26" height="6" fill="#8f8f8f"/></svg>
<div style="position:absolute;left:1918px;top:282px;width:2px;height:1590px;background:#dcdde0;"></div>
<div style="position:absolute;left:1920px;top:282px;width:480px;height:1590px;background:#fafafa;"></div>
<div style="position:absolute;left:2080px;top:282px;width:320px;height:67px;background:#f1f2f4;"></div>
<div style="position:absolute;left:2080px;top:282px;width:2px;height:67px;background:#dcdde0;"></div>
<div style="position:absolute;left:2242px;top:282px;width:2px;height:67px;background:#dcdde0;"></div>
<div style="position:absolute;left:2080px;top:348px;width:320px;height:2px;background:#dcdde0;"></div>
<div class="t" style="left:1969px;top:301.6px;font-size:26px;color:#707070;font-weight:bold;">Style</div>
<div class="t" style="left:2136px;top:300.2px;font-size:26px;color:#707070;font-weight:bold;">Text</div>
<div class="t" style="left:2274px;top:300.2px;font-size:26px;color:#707070;font-weight:bold;">Arrange</div>
<div style="position:absolute;left:2000.3px;top:380.3px;width:71.5px;height:59px;background:#ffffff;border:2.5px solid #1a1a1a;box-sizing:border-box;"></div>
<div style="position:absolute;left:2084.3px;top:380.3px;width:71.5px;height:59px;background:#f5f5f5;border:2.5px solid #666666;box-sizing:border-box;"></div>
<div style="position:absolute;left:2168.3px;top:380.3px;width:71.5px;height:59px;background:#dae8fc;border:2.5px solid #6c8ebf;box-sizing:border-box;"></div>
<div style="position:absolute;left:2252.3px;top:380.3px;width:71.5px;height:59px;background:#d5e8d4;border:2.5px solid #82b366;box-sizing:border-box;"></div>
<div style="position:absolute;left:2000.3px;top:452.5px;width:71.5px;height:59px;background:#ffe6cc;border:2.5px solid #d79b00;box-sizing:border-box;"></div>
<div style="position:absolute;left:2084.3px;top:452.5px;width:71.5px;height:59px;background:#fff2cc;border:2.5px solid #d6b656;box-sizing:border-box;"></div>
<div style="position:absolute;left:2168.3px;top:452.5px;width:71.5px;height:59px;background:#f8cecc;border:2.5px solid #b85450;box-sizing:border-box;"></div>
<div style="position:absolute;left:2252.3px;top:452.5px;width:71.5px;height:59px;background:#e1d5e7;border:2.5px solid #9673a6;box-sizing:border-box;"></div>
<svg style="position:absolute;left:1960px;top:434px;" width="16" height="24" viewBox="0 0 16 24"><path d="M13 3 L4 12 L13 21" fill="none" stroke="#b0b0b0" stroke-width="4.5"/></svg>
<svg style="position:absolute;left:2344px;top:434px;" width="16" height="24" viewBox="0 0 16 24"><path d="M3 3 L12 12 L3 21" fill="none" stroke="#b0b0b0" stroke-width="4.5"/></svg>
<div style="position:absolute;left:1920px;top:536px;width:480px;height:2px;background:#e2e3e5;"></div>
<svg style="position:absolute;left:1956px;top:564px;" width="24" height="24" viewBox="0 0 24 24"><rect x="0" y="0" width="24" height="24" rx="5" fill="#3a82f7"/><path d="M6 12.5 L10.3 17 L18 7.5" fill="none" stroke="#fff" stroke-width="2.6"/></svg>
<div class="t" style="left:1993px;top:564.0px;font-size:24px;color:#707070;font-weight:bold;">Fill</div>
<svg style="position:absolute;left:1956px;top:614px;" width="24" height="24" viewBox="0 0 24 24"><rect x="0" y="0" width="24" height="24" rx="5" fill="#3a82f7"/><path d="M6 12.5 L10.3 17 L18 7.5" fill="none" stroke="#fff" stroke-width="2.6"/></svg>
<div class="t" style="left:1993px;top:613.7px;font-size:24px;color:#707070;font-weight:normal;">Gradient</div>
<div style="position:absolute;left:2116.6px;top:608.7px;width:139px;height:39px;background:#fff;border:1.5px solid #c4c4c4;border-radius:10px;box-sizing:border-box;"></div>
<div class="t" style="left:2135px;top:616.2px;font-size:24px;color:#000;font-weight:normal;">East</div>
<svg style="position:absolute;left:2234px;top:617px;" width="14" height="22" viewBox="0 0 14 22"><path d="M7 0 L13 8 L1 8 Z M7 22 L13 14 L1 14 Z" fill="#000"/></svg>
<div style="position:absolute;left:2268.5px;top:554.5px;width:91px;height:43px;background:linear-gradient(#fbfbfb,#e9e9e9);border:1.5px solid #9a9a9a;border-radius:9px;box-sizing:border-box;"></div>
<div style="position:absolute;left:2276px;top:562.0px;width:76px;height:28px;background:#84b519;border:2px solid #111;box-sizing:border-box;"></div>
<div style="position:absolute;left:2268.5px;top:604.5px;width:91px;height:43px;background:linear-gradient(#fbfbfb,#e9e9e9);border:1.5px solid #9a9a9a;border-radius:9px;box-sizing:border-box;"></div>
<div style="position:absolute;left:2276px;top:612.0px;width:76px;height:28px;background:#1f612b;border:2px solid #111;box-sizing:border-box;"></div>
<div style="position:absolute;left:1920px;top:662px;width:480px;height:2px;background:#e2e3e5;"></div>
<svg style="position:absolute;left:1956px;top:686.5px;" width="24" height="24" viewBox="0 0 24 24"><rect x="0.75" y="0.75" width="22.5" height="22.5" rx="5" fill="#fff" stroke="#c4c4c4" stroke-width="1.5"/></svg>
<div class="t" style="left:1993px;top:686.4px;font-size:24px;color:#707070;font-weight:bold;">Line</div>
<div style="position:absolute;left:1993px;top:731px;width:240px;height:40px;background:#fff;border:1.5px solid #a8a8a8;border-radius:7px;box-sizing:border-box;"></div>
<div style="position:absolute;left:2186px;top:731px;width:1.5px;height:40px;background:#c8c8c8;"></div>
<div style="position:absolute;left:2006px;top:749.8px;width:170px;height:2px;background:#555;"></div>
<svg style="position:absolute;left:2201px;top:744px;" width="18" height="16" viewBox="0 0 18 16"><path d="M0 0 L18 0 L9 16 Z" fill="#6a6a6a"/></svg>
<div style="position:absolute;left:2243px;top:731.4px;width:92px;height:39px;background:#fff;border:1.5px solid #cfcfcf;box-sizing:border-box;"></div>
<div class="t" style="left:2243px;width:86px;text-align:right;top:739.6px;font-size:24px;color:#000">1 pt</div>
<div style="position:absolute;left:2337px;top:731.4px;width:22px;height:39px;background:#fafafa;border:1.5px solid #cfcfcf;border-radius:6px;box-sizing:border-box;"></div>
<div style="position:absolute;left:2337px;top:750.4px;width:22px;height:1.5px;background:#cfcfcf;"></div>
<svg style="position:absolute;left:2341px;top:738.4px;" width="14" height="26" viewBox="0 0 14 26"><path d="M7 1 L13 8 L1 8 Z M7 25 L13 18 L1 18 Z" fill="none" stroke="#8a8a8a" stroke-width="1.6"/></svg>
<div class="t" style="left:1995.4px;top:791.7px;font-size:24px;color:#707070;font-weight:normal;">Perimeter</div>
<div style="position:absolute;left:2243px;top:785.7px;width:92px;height:39px;background:#fff;border:1.5px solid #cfcfcf;box-sizing:border-box;"></div>
<div class="t" style="left:2243px;width:86px;text-align:right;top:793.9px;font-size:24px;color:#000">0 pt</div>
<div style="position:absolute;left:2337px;top:785.7px;width:22px;height:39px;background:#fafafa;border:1.5px solid #cfcfcf;border-radius:6px;box-sizing:border-box;"></div>
<div style="position:absolute;left:2337px;top:804.7px;width:22px;height:1.5px;background:#cfcfcf;"></div>
<svg style="position:absolute;left:2341px;top:792.7px;" width="14" height="26" viewBox="0 0 14 26"><path d="M7 1 L13 8 L1 8 Z M7 25 L13 18 L1 18 Z" fill="none" stroke="#8a8a8a" stroke-width="1.6"/></svg>
<div style="position:absolute;left:1920px;top:836px;width:480px;height:2px;background:#e2e3e5;"></div>
<div class="t" style="left:1956.8px;top:856.0px;font-size:24px;color:#707070;font-weight:bold;">Opacity</div>
<div style="position:absolute;left:2243px;top:851.8px;width:92px;height:39px;background:#fff;border:1.5px solid #cfcfcf;box-sizing:border-box;"></div>
<div class="t" style="left:2243px;width:86px;text-align:right;top:860.0px;font-size:24px;color:#000">100 %</div>
<div style="position:absolute;left:2337px;top:851.8px;width:22px;height:39px;background:#fafafa;border:1.5px solid #cfcfcf;border-radius:6px;box-sizing:border-box;"></div>
<div style="position:absolute;left:2337px;top:870.8px;width:22px;height:1.5px;background:#cfcfcf;"></div>
<svg style="position:absolute;left:2341px;top:858.8px;" width="14" height="26" viewBox="0 0 14 26"><path d="M7 1 L13 8 L1 8 Z M7 25 L13 18 L1 18 Z" fill="none" stroke="#8a8a8a" stroke-width="1.6"/></svg>
<div style="position:absolute;left:1920px;top:898px;width:480px;height:2px;background:#e2e3e5;"></div>
<svg style="position:absolute;left:1960px;top:918.7px;" width="24" height="24" viewBox="0 0 24 24"><rect x="0.75" y="0.75" width="22.5" height="22.5" rx="5" fill="#fff" stroke="#c4c4c4" stroke-width="1.5"/></svg>
<div class="t" style="left:1996.4px;top:917.7px;font-size:24px;color:#707070;font-weight:bold;">Shadow</div>
<div style="position:absolute;left:1920px;top:962px;width:480px;height:2px;background:#e2e3e5;"></div>
<div style="position:absolute;left:1957.7px;top:986.6px;width:400.6px;height:32.5px;background:#fff;border:1.5px solid #d2d2d2;border-radius:8px;box-sizing:border-box;box-shadow:0 1.5px 1px rgba(0,0,0,0.12);"></div>
<div class="t" style="left:1957.7px;width:400.6px;text-align:center;top:991.5px;font-size:24px;color:#1a1a1a;letter-spacing:0.5px">Edit Style</div>
<div style="position:absolute;left:1957.7px;top:1030.6px;width:196.3px;height:32.5px;background:#fff;border:1.5px solid #d2d2d2;border-radius:8px;box-sizing:border-box;box-shadow:0 1.5px 1px rgba(0,0,0,0.12);"></div>
<div class="t" style="left:1957.7px;width:196.3px;text-align:center;top:1035.5px;font-size:24px;color:#1a1a1a;letter-spacing:0.5px">Copy Style</div>
<div style="position:absolute;left:2161.7px;top:1030.6px;width:196.6px;height:32.5px;background:#fff;border:1.5px solid #d2d2d2;border-radius:8px;box-sizing:border-box;box-shadow:0 1.5px 1px rgba(0,0,0,0.12);"></div>
<div class="t" style="left:2161.7px;width:196.6px;text-align:center;top:1035.5px;font-size:24px;color:#1a1a1a;letter-spacing:0.5px">Paste Style</div>
<div style="position:absolute;left:1957.7px;top:1074.8px;width:400.6px;height:32.5px;background:#fff;border:1.5px solid #d2d2d2;border-radius:8px;box-sizing:border-box;box-shadow:0 1.5px 1px rgba(0,0,0,0.12);"></div>
<div class="t" style="left:1957.7px;width:400.6px;text-align:center;top:1079.7px;font-size:24px;color:#1a1a1a;letter-spacing:0.5px">Set as Default Style</div>
<div style="position:absolute;left:1920px;top:1132px;width:480px;height:2px;background:#e2e3e5;"></div>
<div style="position:absolute;left:1924px;top:1138px;width:234px;height:35.7px;background:#e4e4e4;"></div>
<div style="position:absolute;left:2162px;top:1138px;width:233.6px;height:35.7px;background:#e4e4e4;"></div>
<svg style="position:absolute;left:1934px;top:1144.6px;" width="8" height="15" viewBox="0 0 8 15"><path d="M0 0 L8 7.5 L0 15 Z" fill="#9a9a9a"/></svg>
<div class="t" style="left:1953px;top:1144.7px;font-size:24px;color:#000;font-weight:bold;">Property</div>
<div class="t" style="left:2165px;top:1143.7px;font-size:24px;color:#000;font-weight:bold;">Value</div>
<div style="position:absolute;left:1920px;top:1177.5px;width:480px;height:2px;background:#e2e3e5;"></div>
</div></body></html>
